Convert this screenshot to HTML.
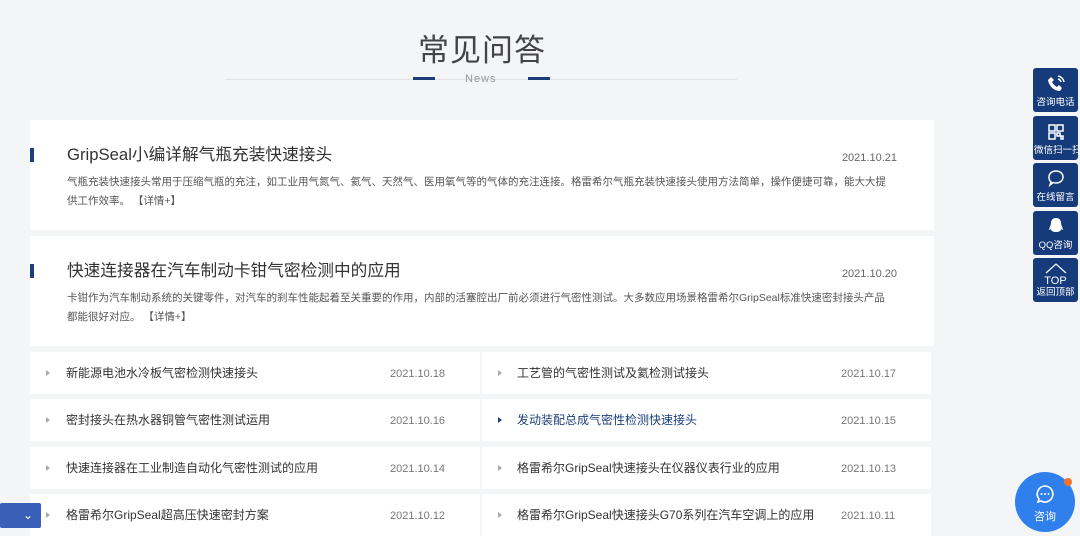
<!DOCTYPE html><html><head><meta charset="utf-8"><style>
*{margin:0;padding:0;box-sizing:border-box}
body{width:1080px;height:530px;overflow:hidden;background:#f4f5f7;font-family:"Liberation Sans","Noto Sans CJK SC",sans-serif;position:relative;color:#333}
.t{position:absolute;left:0;width:964px;top:31px;text-align:center;font-size:31px;color:#444;letter-spacing:1px;line-height:40px}
.line{position:absolute;left:225px;width:512px;top:79px;height:1px;background:#e2e2e2}
.b{position:absolute;top:77px;width:22px;height:3px;background:#1c3f7a}
.news{position:absolute;left:465px;top:73px;font-size:11px;color:#999;letter-spacing:1px}
.card{position:absolute;left:30px;width:904px;height:110px;background:#fff}
.card .bar{position:absolute;left:0;top:28px;width:4px;height:14px;background:#1c3f7a}
.card h3{position:absolute;left:37px;top:23px;font-size:16.7px;line-height:24px;font-weight:normal;color:#333}
.card .d{position:absolute;right:37px;top:32px;font-size:11px;color:#666}
.card p{position:absolute;left:37px;top:53px;width:820px;font-size:10.5px;line-height:19px;color:#555}
.row{position:absolute;height:42px;background:#fff}
.row span{position:absolute;top:13px;font-size:12px;line-height:16px;color:#333}
.row .tri{position:absolute;left:16px;top:18px;width:0;height:0;border-left:4px solid #aaa;border-top:3px solid transparent;border-bottom:3px solid transparent}
.row .dt{position:absolute;top:14px;font-size:11px;color:#777}
.sb{position:absolute;left:1033px;width:45px;height:44px;background:#163b7a;border-radius:3px;color:#fff;font-size:9.5px;text-align:center}
.sb div{position:absolute;bottom:4px;width:100%;white-space:nowrap;overflow:hidden;line-height:11px}
</style></head><body>
<div class="t">常见问答</div>
<div class="line"></div>
<div class="b" style="left:413px"></div><div class="b" style="left:528px"></div>
<div class="news">News</div>

<div class="card" style="top:120px"><div class="bar"></div><h3>GripSeal小编详解气瓶充装快速接头</h3><span class="d">2021.10.21</span>
<p>气瓶充装快速接头常用于压缩气瓶的充注，如工业用气氮气、氦气、天然气、医用氧气等的气体的充注连接。格雷希尔气瓶充装快速接头使用方法简单，操作便捷可靠，能大大提供工作效率。 【详情+】</p></div>
<div class="card" style="top:236px"><div class="bar"></div><h3>快速连接器在汽车制动卡钳气密检测中的应用</h3><span class="d">2021.10.20</span>
<p>卡钳作为汽车制动系统的关键零件，对汽车的刹车性能起着至关重要的作用，内部的活塞腔出厂前必须进行气密性测试。大多数应用场景格雷希尔GripSeal标准快速密封接头产品都能很好对应。 【详情+】</p></div>

<div class="row" style="left:30px;width:450px;top:352px"><i class="tri"></i><span style="left:36px">新能源电池水冷板气密检测快速接头</span><span class="dt" style="left:360px">2021.10.18</span></div>
<div class="row" style="left:482px;width:449px;top:352px"><i class="tri"></i><span style="left:35px">工艺管的气密性测试及氦检测试接头</span><span class="dt" style="left:359px">2021.10.17</span></div>
<div class="row" style="left:30px;width:450px;top:399px"><i class="tri"></i><span style="left:36px">密封接头在热水器铜管气密性测试运用</span><span class="dt" style="left:360px">2021.10.16</span></div>
<div class="row" style="left:482px;width:449px;top:399px"><i class="tri" style="border-left-color:#1c3f7a"></i><span style="left:35px;color:#1c3f7a">发动装配总成气密性检测快速接头</span><span class="dt" style="left:359px">2021.10.15</span></div>
<div class="row" style="left:30px;width:450px;top:447px"><i class="tri"></i><span style="left:36px">快速连接器在工业制造自动化气密性测试的应用</span><span class="dt" style="left:360px">2021.10.14</span></div>
<div class="row" style="left:482px;width:449px;top:447px"><i class="tri"></i><span style="left:35px">格雷希尔GripSeal快速接头在仪器仪表行业的应用</span><span class="dt" style="left:359px">2021.10.13</span></div>
<div class="row" style="left:30px;width:450px;top:494px"><i class="tri"></i><span style="left:36px">格雷希尔GripSeal超高压快速密封方案</span><span class="dt" style="left:360px">2021.10.12</span></div>
<div class="row" style="left:482px;width:449px;top:494px"><i class="tri"></i><span style="left:35px">格雷希尔GripSeal快速接头G70系列在汽车空调上的应用</span><span class="dt" style="left:359px">2021.10.11</span></div>

<div style="position:absolute;left:0;top:503px;width:41px;height:25px;background:#3a5fb8;border-radius:2px;color:#fff;text-align:right;padding-right:8px;font-size:12px;line-height:24px">⌄</div>

<div class="sb" style="top:68px"><svg width="20" height="20" viewBox="0 0 20 20" style="margin-top:6px"><path d="M5 3l3 3-2 2c1 2 3 4 5 5l2-2 3 3-2 3C8 17 3 12 2 6z" fill="#fff"/><path d="M12 5a4 4 0 0 1 3 3M12 2a7 7 0 0 1 6 6" stroke="#fff" fill="none" stroke-width="1.5"/></svg><div>咨询电话</div></div>
<div class="sb" style="top:116px"><svg width="16" height="16" viewBox="0 0 16 16" style="margin-top:8px"><path d="M1 1h6v6H1zM9 1h6v6H9zM1 9h6v6H1zM9 9h3v3H9zM13 12h2v3h-2z" fill="none" stroke="#fff" stroke-width="1.5"/></svg><div style="text-align:left;padding-left:1px">微信扫一扫</div></div>
<div class="sb" style="top:163px"><svg width="18" height="18" viewBox="0 0 18 18" style="margin-top:6px"><path d="M9 2c4 0 7 2.5 7 6s-3 6-7 6c-1 0-2 0-3-.5L3 16l1-3C2.5 12 2 10 2 8c0-3.5 3-6 7-6z" fill="none" stroke="#fff" stroke-width="1.5"/></svg><div>在线留言</div></div>
<div class="sb" style="top:211px"><svg width="16" height="18" viewBox="0 0 16 18" style="margin-top:6px"><path d="M8 1c3 0 5 2 5 5 0 2 2 5 2 7-1 0-2-1-2-1 0 2-2 3-5 3s-5-1-5-3c0 0-1 1-2 1 0-2 2-5 2-7 0-3 2-5 5-5z" fill="#fff"/></svg><div>QQ咨询</div></div>
<div class="sb" style="top:258px"><svg width="24" height="12" viewBox="0 0 24 12" style="margin-top:4px"><path d="M2 11L12 2l10 9" fill="none" stroke="#fff" stroke-width="1.2"/></svg><div style="bottom:15px;font-size:11px">TOP</div><div>返回顶部</div></div>

<div style="position:absolute;left:1015px;top:472px;width:60px;height:60px;border-radius:50%;background:#2f7fec;color:#fff;text-align:center;font-size:11px">
<svg width="20" height="20" viewBox="0 0 20 20" style="margin-top:12px"><path d="M10 2a8 8 0 1 1-4 15l-3 1 1-3A8 8 0 0 1 10 2z" fill="none" stroke="#fff" stroke-width="1.6"/><circle cx="6.5" cy="10" r="1" fill="#fff"/><circle cx="10" cy="10" r="1" fill="#fff"/><circle cx="13.5" cy="10" r="1" fill="#fff"/></svg><div style="margin-top:1px">咨询</div></div>
<div style="position:absolute;left:1064px;top:478px;width:8px;height:8px;border-radius:50%;background:#f0732a"></div>
</body></html>
